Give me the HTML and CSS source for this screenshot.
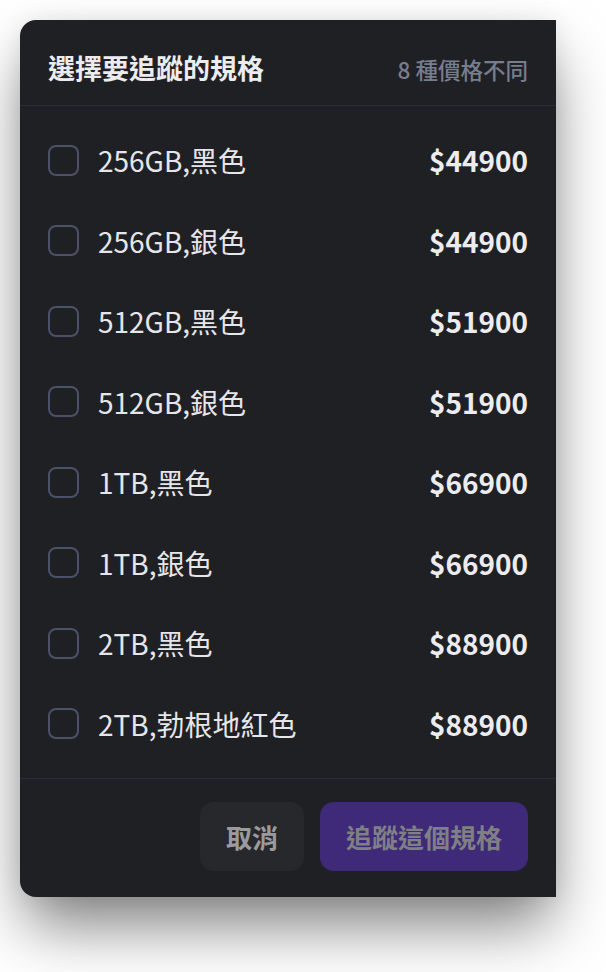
FILE: index.html
```html
<!DOCTYPE html>
<html lang="zh-Hant">
<head>
<meta charset="utf-8">
<title>選擇要追蹤的規格</title>
<link rel="stylesheet" href="styles.css">
</head>
<body>
<div class="panel">
  <header class="panel-head">
    <h2 class="title">選擇要追蹤的規格</h2>
    <span class="subtitle">8 種價格不同</span>
  </header>
  <ul class="list">
    <li class="row"><span class="check"></span><span class="name">256GB,黑色</span><span class="price">$44900</span></li>
    <li class="row"><span class="check"></span><span class="name">256GB,銀色</span><span class="price">$44900</span></li>
    <li class="row"><span class="check"></span><span class="name">512GB,黑色</span><span class="price">$51900</span></li>
    <li class="row"><span class="check"></span><span class="name">512GB,銀色</span><span class="price">$51900</span></li>
    <li class="row"><span class="check"></span><span class="name">1TB,黑色</span><span class="price">$66900</span></li>
    <li class="row"><span class="check"></span><span class="name">1TB,銀色</span><span class="price">$66900</span></li>
    <li class="row"><span class="check"></span><span class="name">2TB,黑色</span><span class="price">$88900</span></li>
    <li class="row"><span class="check"></span><span class="name">2TB,勃根地紅色</span><span class="price">$88900</span></li>
  </ul>
  <footer class="panel-foot">
    <button class="btn btn-cancel">取消</button>
    <button class="btn btn-primary">追蹤這個規格</button>
  </footer>
</div>
</body>
</html>
```
FILE: styles.css
```css
* { box-sizing: border-box; }
html, body { margin: 0; padding: 0; background: #ffffff; }
body {
  font-family: "Noto Sans CJK TC", "Noto Sans", sans-serif;
  width: 606px;
  height: 972px;
  overflow: hidden;
}
.panel {
  margin: 20px 0 0 20px;
  width: 536px;
  height: 877px;
  background: #1f2024;
  border-radius: 16px 0 0 16px;
  box-shadow: 0 34px 62px -6px rgba(0, 0, 0, 0.5), 0 0 24px rgba(0, 0, 0, 0.08);
  display: flex;
  flex-direction: column;
}
.panel-head {
  height: 86px;
  padding: 0 28px;
  display: flex;
  justify-content: space-between;
  align-items: baseline;
  border-bottom: 1px solid #2b2d3c;
}
.title {
  margin: 0;
  font-size: 27px;
  font-weight: 700;
  line-height: 1;
  padding-top: 34px;
  color: #ececef;
}
.subtitle {
  font-size: 22.5px;
  font-weight: 500;
  color: #787d8e;
  line-height: 1;
}
.list {
  list-style: none;
  margin: 0;
  padding: 14px 28px 14px 28px;
  border-bottom: 1px solid #2b2d3c;
}
.row {
  height: 80.5px;
  display: flex;
  align-items: center;
}
.check {
  width: 31px;
  height: 31px;
  border: 2px solid #4b5168;
  border-radius: 8px;
  flex: none;
}
.name {
  margin-left: 19px;
  font-size: 28px;
  color: #e6e6ea;
  flex: 1;
}
.price {
  font-size: 28px;
  font-weight: 700;
  color: #ececef;
}
.panel-foot {
  display: flex;
  justify-content: flex-end;
  gap: 16px;
  padding: 23px 28px 0 28px;
}
.btn {
  height: 68.5px;
  border: none;
  border-radius: 14px;
  padding: 0 26px;
  font-family: "Noto Sans CJK TC", "Noto Sans", sans-serif;
  font-size: 26px;
  font-weight: 700;
}
.btn-cancel {
  background: #27282c;
  color: #9b9b9d;
}
.btn-primary {
  background: #3e2a78;
  color: #7f7f86;
}
```
